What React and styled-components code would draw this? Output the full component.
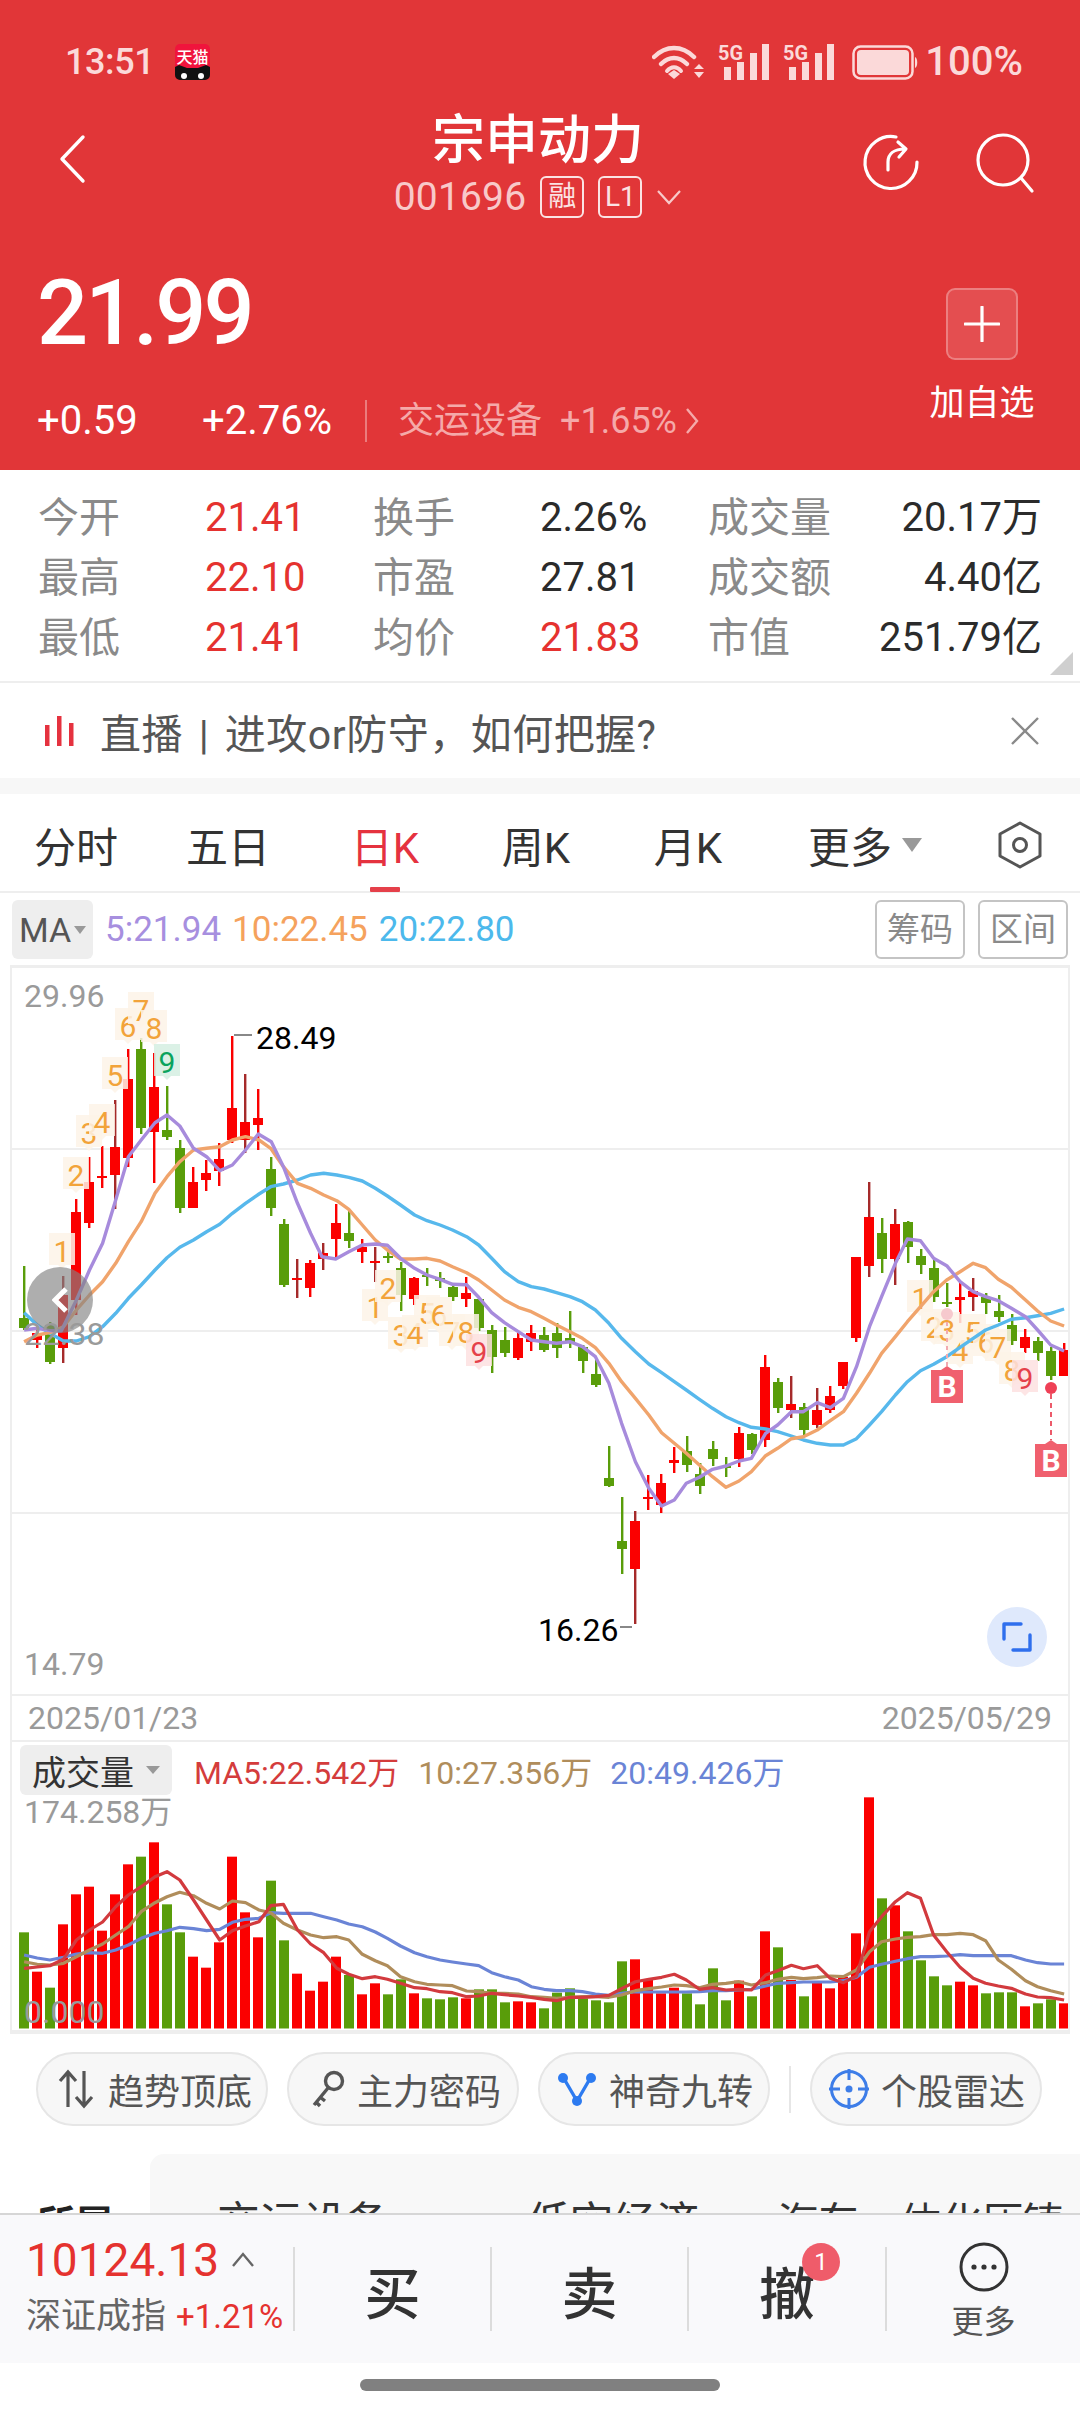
import React from "react";
import styled, { createGlobalStyle } from "styled-components";

const GlobalStyle = createGlobalStyle`
  html, body { margin: 0; padding: 0; background: #fff; }
  * { box-sizing: border-box; }
  body { font-family: Roboto, "Noto Sans CJK SC", sans-serif; }
`;

const RED = "#e5322f";
const CANDLE_RED = "#fb0000";
const CANDLE_GREEN = "#599d0a";

const Page = styled.div`
  width: 1080px;
  height: 2412px;
  display: flex;
  flex-direction: column;
  overflow: hidden;
  background: #fff;
`;

const Header = styled.div`
  height: 470px;
  background: #e13638;
  color: #fff;
  display: flex;
  flex-direction: column;
  flex: none;
`;

const StatusBar = styled.div`
  height: 106px;
  padding: 44px 57px 0 65px;
  display: flex;
  align-items: flex-start;
  color: #fbd9d9;
  font-size: 36px;
  font-weight: 500;
  line-height: 36px;
`;

const Clock = styled.span`
  width: 110px;
  letter-spacing: -0.4px;
`;

const StatusRight = styled.div`
  margin-left: auto;
  display: flex;
  align-items: center;
`;

const StatusItem = styled.span`
  display: flex;
  margin-right: ${(p) => p.$gap || 0}px;
`;

const BatteryText = styled.span`
  font-size: 40px;
  line-height: 36px;
`;

const NavBar = styled.div`
  height: 114px;
  padding: 0 48px 0 44px;
  display: grid;
  grid-template-columns: 1fr auto 1fr;
  align-items: start;
`;

const BackSlot = styled.div`
  padding: 28px 0 0 14px;
`;

const NavTitle = styled.div`
  text-align: center;
  margin-top: 5px;
`;

const StockName = styled.div`
  font-size: 53px;
  line-height: 60px;
  font-weight: 500;
`;

const StockMeta = styled.div`
  margin-top: 5px;
  display: flex;
  align-items: center;
  justify-content: center;
  gap: 14px;
  color: #f8c9c9;
  font-size: 39px;
  line-height: 42px;
  letter-spacing: 0.2px;
`;

const MetaBadge = styled.span`
  width: 44px;
  height: 42px;
  border: 2px solid #fbe3e3;
  border-radius: 6px;
  color: #fbe3e3;
  font-size: 28px;
  line-height: 38px;
  text-align: center;
  letter-spacing: 0;
`;

const NavIcons = styled.div`
  display: flex;
  gap: 54px;
  padding-top: 26px;
  margin-right: -3px;
  justify-self: end;
`;

const QuoteArea = styled.div`
  flex: 1;
  padding: 0 44px 0 37px;
  display: flex;
  justify-content: space-between;
`;

const PriceBlock = styled.div`
  display: flex;
  flex-direction: column;
`;

const Price = styled.div`
  font-size: 90px;
  line-height: 90px;
  font-weight: 500;
  letter-spacing: -3px;
  margin-top: 49px;
`;

const ChangeRow = styled.div`
  margin-top: 40px;
  display: flex;
  align-items: center;
  font-size: 40px;
  line-height: 44px;
  font-weight: 400;
`;

const ChangeValue = styled.span`
  width: ${(p) => p.$w}px;
`;

const Divider = styled.span`
  width: 2px;
  height: 42px;
  background: rgba(255, 255, 255, 0.35);
  margin: 0 31px 0 33px;
`;

const SectorText = styled.span`
  color: #f5a9a9;
  font-size: ${(p) => p.$size}px;
  font-weight: 400;
  margin-right: ${(p) => p.$gap}px;
`;

const AddBlock = styled.div`
  display: flex;
  flex-direction: column;
  align-items: center;
  width: 108px;
  margin-top: 68px;
`;

const AddButton = styled.div`
  width: 72px;
  height: 72px;
  border: 2px solid rgba(255, 255, 255, 0.28);
  border-radius: 9px;
  background: rgba(255, 255, 255, 0.12);
  display: flex;
  align-items: center;
  justify-content: center;
`;

const AddLabel = styled.div`
  margin-top: 24px;
  font-size: 35px;
  line-height: 40px;
  white-space: nowrap;
`;

const Stats = styled.div`
  flex: none;
  height: 213px;
  padding: 18px 38px 0;
  display: grid;
  grid-template-columns: 167px 168px 167px 168px 167px 167px;
  grid-auto-rows: 60px;
  border-bottom: 2px solid #eeeeee;
  position: relative;
`;

const StatLabel = styled.div`
  font-size: 41px;
  line-height: 60px;
  color: #8a8a8a;
  white-space: nowrap;
`;

const StatValue = styled.div`
  font-size: 40px;
  line-height: 60px;
  color: ${(p) => (p.$red ? RED : "#2b2b2b")};
  text-align: ${(p) => (p.$right ? "right" : "left")};
  white-space: nowrap;
`;

const CornerMark = styled.div`
  position: absolute;
  right: 7px;
  top: 182px;
  width: 23px;
  height: 23px;
  background: #cfcfcf;
  clip-path: polygon(100% 0, 100% 100%, 0 100%);
`;

const LiveRow = styled.div`
  flex: none;
  height: 95px;
  padding: 0 40px 0 45px;
  display: flex;
  align-items: center;
`;

const LiveText = styled.div`
  margin-left: 25px;
  font-size: 41px;
  letter-spacing: 0.5px;
  word-spacing: 5px;
  color: #555;
  white-space: nowrap;
  flex: 1;
`;

const Gap = styled.div`
  flex: none;
  height: 16px;
  background: #f7f7f7;
`;

const Tabs = styled.div`
  flex: none;
  height: 99px;
  display: flex;
  align-items: center;
  border-bottom: 2px solid #eeeeee;
  padding-top: 4px;
`;

const Tab = styled.div`
  position: relative;
  width: ${(p) => p.$w}px;
  height: 93px;
  display: flex;
  align-items: center;
  justify-content: center;
  gap: 10px;
  font-size: 42px;
  color: ${(p) => (p.$active ? "#e5323f" : "#333")};

  &::after {
    content: "";
    display: ${(p) => (p.$active ? "block" : "none")};
    position: absolute;
    bottom: -1px;
    left: 50%;
    margin-left: -15px;
    width: 30px;
    height: 5px;
    background: #e5404a;
    border-radius: 1px;
  }
`;

const Caret = styled.span`
  width: 0;
  height: 0;
  border-left: ${(p) => p.$w}px solid transparent;
  border-right: ${(p) => p.$w}px solid transparent;
  border-top: ${(p) => p.$h}px solid #999;
`;

const MaRow = styled.div`
  flex: none;
  height: 72px;
  padding: 7px 12px 6px;
  display: flex;
  align-items: center;
`;

const MaChip = styled.div`
  width: 81px;
  height: 59px;
  border-radius: 6px;
  background: #eeeeee;
  color: #555;
  display: flex;
  align-items: center;
  justify-content: center;
  gap: 3px;
  font-size: 34px;
  margin-right: 12px;
`;

const MaValue = styled.span`
  color: ${(p) => p.$color};
  font-size: ${(p) => p.$size || 35}px;
  margin-right: ${(p) => p.$gap || 11}px;
  white-space: nowrap;
`;

const RangeButtons = styled.div`
  margin-left: auto;
  display: flex;
  gap: 13px;
`;

const RangeButton = styled.div`
  width: 90px;
  height: 59px;
  border: 2px solid #c4c4c4;
  border-radius: 6px;
  color: #8a8a8a;
  font-size: 33px;
  line-height: 55px;
  text-align: center;
`;

const ChartFrame = styled.div`
  position: relative;
  flex: none;
  width: 1060px;
  height: ${(p) => p.$h}px;
  margin-left: 10px;
  border-left: 2px solid #eeeeee;
  border-right: 2px solid #eeeeee;
  overflow: hidden;
`;

const ChartSvg = styled.svg`
  position: absolute;
  left: -2px;
  top: 0;
  display: block;
`;

const Tag = styled.span`
  position: absolute;
  left: ${(p) => p.$x - 12}px;
  top: ${(p) => p.$y}px;
  font-size: 32px;
  line-height: 36px;
  color: ${(p) => p.$color || "#9a9a9a"};
  white-space: nowrap;
`;

const ExpandButton = styled.div`
  position: absolute;
  left: 975px;
  top: 642px;
  width: 60px;
  height: 60px;
  border-radius: 50%;
  background: #dfe9fc;
  display: flex;
  align-items: center;
  justify-content: center;
`;

const Knob = styled.div`
  position: absolute;
  left: 15px;
  top: 302px;
  width: 66px;
  height: 66px;
  border-radius: 50%;
  background: rgba(130, 130, 130, 0.65);
  display: flex;
  align-items: center;
  justify-content: center;
`;

const DateRow = styled.div`
  flex: none;
  height: 48px;
  margin-left: 10px;
  width: 1060px;
  padding: 0 16px;
  display: flex;
  align-items: center;
  justify-content: space-between;
  border: 2px solid #eeeeee;
  font-size: 32px;
  color: #9a9a9a;
`;

const VolumeLegend = styled.div`
  position: absolute;
  left: 8px;
  top: 3px;
  display: flex;
  align-items: center;
`;

const VolumeChip = styled.div`
  width: 152px;
  height: 50px;
  border-radius: 6px;
  background: #eeeeee;
  color: #333;
  font-size: 34px;
  display: flex;
  align-items: center;
  justify-content: center;
  gap: 12px;
  margin-right: 22px;
`;

const FrameBottom = styled.div`
  flex: none;
  height: 4px;
  width: 1060px;
  margin-left: 10px;
  background: #eeeeee;
`;

const Pills = styled.div`
  flex: none;
  padding: 18px 0 0 36px;
  display: flex;
  align-items: center;
`;

const Pill = styled.div`
  width: 232px;
  height: 74px;
  margin-right: 19px;
  padding-left: ${(p) => p.$pad}px;
  border: 2px solid #e6e6e6;
  border-radius: 37px;
  background: #f7f7f7;
  color: #555;
  font-size: 36px;
  display: flex;
  align-items: center;
  gap: ${(p) => p.$gap}px;
  white-space: nowrap;
`;

const PillDivider = styled.div`
  width: 2px;
  height: 47px;
  margin-right: 19px;
  background: #e6e6e6;
`;

const Content = styled.div`
  flex: 1;
  min-height: 0;
  overflow: hidden;
  display: flex;
  flex-direction: column;
`;

const ConceptRow = styled.div`
  margin-top: 28px;
  display: flex;
`;

const ConceptTitle = styled.div`
  width: 150px;
  padding: 48px 0 0 37px;
  font-size: 38px;
  font-weight: 700;
  line-height: 44px;
  color: #222;
`;

const ConceptPanel = styled.div`
  flex: 1;
  height: 120px;
  border-top-left-radius: 14px;
  background: #f8f8f8;
  padding: 47px 0 0 67px;
  display: flex;
  line-height: 44px;
  color: #333;
  white-space: nowrap;
`;

const ConceptItem = styled.span`
  width: ${(p) => p.$w}px;
  font-size: ${(p) => p.$size}px;
`;

const BottomBar = styled.div`
  flex: none;
  height: 150px;
  border-top: 2px solid #d6d6d6;
  background: #f9f9fb;
  display: flex;
  align-items: center;
`;

const IndexBlock = styled.div`
  width: 295px;
  height: 84px;
  padding-left: 26px;
  border-right: 2px solid #dcdcdc;
  display: flex;
  flex-direction: column;
  white-space: nowrap;
`;

const IndexValue = styled.div`
  font-size: 46px;
  line-height: 34px;
  margin-top: -4px;
  color: ${RED};
  display: flex;
  align-items: center;
  gap: 12px;
`;

const IndexName = styled.div`
  margin-top: 20px;
  font-size: 35px;
  line-height: 40px;
  color: #666;
  display: flex;
  align-items: center;
  gap: 10px;
`;

const IndexChange = styled.span`
  font-size: 33px;
  color: ${RED};
`;

const ActionCell = styled.div`
  position: relative;
  width: ${(p) => p.$w}px;
  height: 84px;
  border-right: 2px solid #dcdcdc;
  display: flex;
  align-items: center;
  justify-content: center;
  font-size: 56px;
  font-weight: 500;
  color: #333;
`;

const CountBadge = styled.span`
  position: absolute;
  left: 113px;
  top: -4px;
  width: 38px;
  height: 38px;
  border-radius: 50%;
  background: #ef5c6a;
  color: #fff;
  font-size: 24px;
  font-weight: 400;
  line-height: 38px;
  text-align: center;
`;

const MoreCell = styled.div`
  flex: 1;
  display: flex;
  flex-direction: column;
  align-items: center;
  gap: 12px;
  font-size: 32px;
  line-height: 36px;
  color: #555;
  padding-top: 4px;
`;

const HomeArea = styled.div`
  flex: none;
  height: 49px;
  background: #fff;
  padding-top: 16px;
  display: flex;
  justify-content: center;
`;

const HomePill = styled.div`
  width: 360px;
  height: 12px;
  border-radius: 6px;
  background: #808080;
`;

// x of the n-th trading day on screen
const dayX = (i) => 24 + i * 13;

// [wick top, body top, body bottom, wick bottom, colour] in page pixels. d = red body with dark wick
const candles = [
  [1266, 1318, 1328, 1330, "g"], [1325, 1333, 1340, 1348, "r"], [1322, 1325, 1362, 1364, "g"], [1276, 1295, 1348, 1363, "d"],
  [1199, 1212, 1300, 1315, "r"], [1157, 1182, 1223, 1228, "r"], [1146, 1176, 1178, 1188, "r"], [1100, 1147, 1175, 1209, "d"],
  [1049, 1079, 1158, 1167, "r"], [1038, 1049, 1128, 1134, "g"], [1053, 1087, 1132, 1183, "r"], [1086, 1130, 1137, 1140, "g"],
  [1140, 1148, 1208, 1213, "g"], [1167, 1182, 1208, 1208, "r"], [1160, 1173, 1180, 1191, "r"], [1143, 1159, 1171, 1186, "r"],
  [1036, 1108, 1140, 1143, "r"], [1074, 1122, 1140, 1153, "d"], [1089, 1118, 1125, 1150, "r"], [1157, 1169, 1208, 1216, "g"],
  [1219, 1224, 1285, 1287, "g"], [1259, 1278, 1280, 1298, "d"], [1260, 1263, 1288, 1297, "r"], [1243, 1253, 1259, 1270, "d"],
  [1204, 1223, 1239, 1258, "r"], [1211, 1233, 1241, 1248, "g"], [1239, 1247, 1252, 1263, "r"], [1247, 1261, 1263, 1282, "d"],
  [1252, 1256, 1258, 1263, "g"], [1262, 1268, 1295, 1311, "g"], [1277, 1278, 1299, 1305, "r"], [1268, 1275, 1277, 1286, "g"],
  [1272, 1278, 1281, 1288, "g"], [1285, 1287, 1297, 1301, "g"], [1277, 1293, 1299, 1307, "r"], [1298, 1299, 1328, 1331, "g"],
  [1325, 1330, 1357, 1373, "g"], [1327, 1340, 1353, 1357, "g"], [1333, 1338, 1358, 1360, "r"], [1325, 1333, 1342, 1351, "r"],
  [1327, 1335, 1350, 1352, "g"], [1323, 1333, 1348, 1358, "g"], [1311, 1338, 1343, 1348, "g"], [1345, 1347, 1361, 1373, "g"],
  [1358, 1374, 1385, 1387, "g"], [1446, 1478, 1486, 1487, "g"], [1497, 1541, 1549, 1574, "g"], [1511, 1521, 1569, 1624, "d"],
  [1475, 1497, 1499, 1510, "r"], [1474, 1483, 1505, 1513, "r"], [1447, 1460, 1463, 1473, "r"], [1436, 1451, 1465, 1472, "g"],
  [1463, 1474, 1486, 1494, "g"], [1441, 1449, 1459, 1466, "g"], [1457, 1466, 1468, 1477, "g"], [1427, 1433, 1459, 1467, "r"],
  [1433, 1434, 1450, 1454, "g"], [1355, 1367, 1440, 1447, "r"], [1378, 1382, 1408, 1413, "g"], [1376, 1404, 1410, 1418, "d"],
  [1403, 1407, 1430, 1435, "g"], [1388, 1410, 1425, 1428, "d"], [1386, 1396, 1410, 1413, "r"], [1362, 1362, 1386, 1389, "r"],
  [1257, 1257, 1338, 1342, "r"], [1182, 1217, 1266, 1277, "d"], [1218, 1233, 1259, 1273, "g"], [1209, 1224, 1259, 1285, "d"],
  [1221, 1222, 1247, 1263, "g"], [1249, 1256, 1265, 1274, "g"], [1260, 1268, 1297, 1302, "g"], [1283, 1302, 1304, 1307, "g"],
  [1283, 1297, 1300, 1323, "r"], [1278, 1291, 1297, 1311, "d"], [1293, 1297, 1303, 1314, "g"], [1295, 1311, 1317, 1322, "g"],
  [1314, 1325, 1341, 1345, "g"], [1329, 1337, 1348, 1353, "r"], [1337, 1341, 1353, 1361, "g"], [1347, 1351, 1376, 1380, "g"],
  [1343, 1350, 1376, 1376, "r"],
];

// the polylines were read off two crops, left half then right half
const leftPt = (base) => (p) => `${(p[0] / 2.904).toFixed(1)},${(base + p[1] / 3).toFixed(1)}`;
const rightPt = (base) => (p) => `${(540 + p[0] / 2.904).toFixed(1)},${(base + p[1] / 3).toFixed(1)}`;
const joinLine = (a, b, baseA, baseB) => [...a.map(leftPt(baseA)), ...b.map(rightPt(baseB))].join(" ");

const ma5 = joinLine(
  [[70,1110],[108,1105],[145,1112],[178,1112],[222,1020],[260,930],[298,850],[336,720],[373,590],[410,540],[450,488],[485,465],[522,498],[562,565],[600,590],[638,632],[675,615],[713,570],[750,522],[788,545],[823,620],[864,730],[902,820],[935,890],[975,897],[1013,875],[1052,855],[1090,852],[1125,856],[1163,895],[1204,925],[1240,945],[1278,958],[1314,973],[1355,974],[1390,1012],[1428,1058],[1465,1088],[1505,1115],[1543,1140]],
  [[12,575],[48,580],[87,575],[123,590],[161,620],[200,700],[237,820],[277,935],[316,1015],[353,1068],[390,1050],[425,1000],[463,982],[501,958],[540,948],[578,933],[614,925],[655,850],[690,825],[730,785],[765,785],[805,758],[843,773],[881,745],[919,650],[957,530],[992,440],[1032,340],[1067,267],[1105,272],[1143,325],[1181,347],[1220,395],[1258,425],[1294,440],[1331,452],[1369,475],[1410,500],[1445,540],[1483,585],[1522,603]],
  960, 1150
);
const ma10 = joinLine(
  [[70,1145],[108,1125],[145,1118],[184,1100],[222,1050],[260,1005],[298,965],[336,910],[373,845],[410,785],[450,700],[485,650],[522,605],[562,570],[600,565],[638,560],[675,540],[713,530],[752,540],[786,565],[823,620],[864,670],[902,685],[940,705],[978,722],[1013,748],[1052,795],[1090,840],[1125,870],[1163,897],[1204,897],[1240,895],[1278,903],[1314,920],[1355,938],[1390,960],[1428,990],[1465,1020],[1505,1042],[1543,1055]],
  [[12,505],[48,525],[87,545],[123,565],[161,593],[200,640],[237,695],[277,745],[316,795],[353,848],[390,880],[425,910],[463,945],[501,980],[540,1012],[578,993],[614,965],[655,917],[690,895],[730,866],[765,860],[805,840],[843,812],[881,785],[919,730],[957,670],[992,610],[1032,560],[1067,515],[1105,470],[1143,425],[1181,390],[1220,365],[1258,340],[1294,353],[1331,388],[1369,412],[1410,450],[1445,483],[1483,513],[1522,528]],
  960, 1150
);
const ma20 = joinLine(
  [[70,1058],[108,1095],[145,1120],[184,1143],[222,1143],[260,1130],[298,1100],[336,1060],[373,1015],[410,975],[450,930],[485,893],[522,862],[562,840],[600,815],[638,793],[675,760],[713,730],[752,702],[786,680],[823,672],[864,660],[902,645],[940,640],[978,645],[1013,652],[1052,663],[1090,685],[1125,708],[1163,735],[1204,765],[1240,782],[1278,795],[1314,810],[1355,830],[1390,855],[1428,895],[1465,935],[1505,965],[1543,980]],
  [[12,417],[48,428],[87,440],[123,455],[161,480],[200,520],[237,565],[277,605],[316,642],[353,668],[390,695],[425,720],[463,748],[501,775],[540,800],[578,818],[614,832],[655,837],[690,845],[730,858],[765,870],[805,880],[843,885],[881,885],[919,866],[957,825],[992,785],[1032,735],[1067,695],[1105,662],[1143,643],[1181,620],[1220,592],[1258,565],[1294,540],[1331,525],[1369,508],[1410,503],[1445,497],[1483,490],[1522,477]],
  960, 1150
);

// top of each volume bar in crop units, g = green
const volumes = [
  [637,"g"],[755,"r"],[803,"g"],[613,"r"],[523,"r"],[500,"r"],[632,"r"],[523,"r"],[433,"r"],[410,"g"],[367,"r"],[553,"g"],[637,"g"],[710,"r"],[743,"r"],[667,"r"],[410,"r"],[577,"r"],[652,"r"],[482,"g"],
  [661,"g"],[761,"r"],[812,"r"],[785,"r"],[710,"r"],[765,"g"],[823,"r"],[790,"r"],[823,"g"],[778,"g"],[820,"r"],[835,"g"],[838,"g"],[832,"g"],[835,"r"],[808,"g"],[808,"g"],[847,"g"],[844,"r"],[847,"r"],
  [865,"g"],[818,"g"],[805,"g"],[835,"g"],[841,"g"],[847,"g"],[724,"g"],[718,"r"],[778,"r"],[820,"r"],[803,"r"],[820,"g"],[853,"g"],[745,"g"],[841,"g"],[782,"r"],[829,"g"],[634,"r"],[682,"g"],[780,"r"],
  [829,"g"],[785,"r"],[805,"r"],[770,"r"],[640,"r"],[232,"r"],[535,"g"],[556,"r"],[634,"g"],[721,"g"],[769,"g"],[796,"g"],[785,"r"],[796,"r"],[820,"g"],[817,"g"],[817,"g"],[859,"r"],[850,"g"],[838,"g"],[850,"r"],
];

const volBlue = joinLine(
  [[70,705],[108,714],[145,720],[184,712],[222,702],[260,698],[298,700],[336,690],[373,675],[410,655],[450,640],[485,632],[522,622],[562,626],[600,632],[638,628],[675,607],[713,598],[752,595],[786,578],[823,580],[864,580],[902,580],[940,590],[978,600],[1013,612],[1052,620],[1090,636],[1125,655],[1163,678],[1204,698],[1240,710],[1278,720],[1314,726],[1355,732],[1390,737],[1428,758],[1465,770],[1505,780],[1543,800]],
  [[12,808],[48,812],[87,812],[123,815],[161,822],[200,826],[237,820],[277,815],[316,816],[353,816],[390,816],[425,816],[463,815],[501,812],[540,812],[578,810],[614,808],[655,798],[690,790],[730,788],[765,786],[805,786],[843,786],[881,782],[919,772],[957,742],[992,733],[1032,724],[1067,716],[1105,710],[1143,710],[1181,708],[1220,704],[1258,707],[1294,707],[1331,707],[1369,707],[1410,720],[1445,728],[1483,732],[1522,732]],
  1720, 1720
);
const volTan = joinLine(
  [[70,725],[108,733],[145,735],[184,730],[222,710],[260,690],[298,672],[336,645],[373,620],[410,575],[450,548],[485,530],[522,517],[562,527],[600,550],[638,567],[675,543],[713,548],[752,570],[786,578],[823,610],[864,630],[902,645],[940,653],[978,650],[1013,660],[1052,703],[1090,722],[1125,737],[1163,770],[1204,785],[1240,793],[1278,795],[1314,797],[1355,813],[1390,815],[1428,820],[1465,820],[1505,822],[1543,830]],
  [[12,832],[48,835],[87,832],[123,830],[161,830],[200,832],[237,825],[277,812],[316,806],[353,801],[390,795],[425,797],[463,803],[501,793],[540,790],[578,785],[614,795],[655,788],[690,778],[730,772],[765,776],[805,773],[843,768],[881,770],[919,750],[957,695],[992,665],[1032,657],[1067,652],[1105,650],[1143,644],[1181,644],[1220,640],[1258,644],[1294,662],[1331,720],[1369,748],[1410,782],[1445,800],[1483,812],[1522,822]],
  1720, 1720
);
const volRed = joinLine(
  [[70,745],[108,741],[145,737],[184,718],[222,660],[260,630],[298,606],[336,560],[373,525],[410,500],[450,470],[485,455],[522,480],[562,540],[600,600],[638,660],[675,632],[713,618],[752,605],[786,557],[823,553],[864,630],[902,672],[940,698],[978,745],[1013,763],[1052,776],[1090,770],[1125,778],[1163,790],[1204,803],[1240,806],[1278,815],[1314,818],[1355,830],[1390,828],[1428,820],[1465,824],[1505,828],[1543,832]],
  [[12,838],[48,842],[87,832],[123,832],[161,830],[200,826],[237,806],[277,785],[316,778],[353,772],[390,763],[425,780],[463,808],[501,803],[540,810],[578,808],[614,810],[655,765],[690,752],[730,736],[765,746],[805,737],[843,775],[881,788],[919,768],[957,635],[992,590],[1032,545],[1067,518],[1105,535],[1143,645],[1181,695],[1220,742],[1258,775],[1294,790],[1331,798],[1369,805],[1410,822],[1445,831],[1483,833],[1522,840]],
  1720, 1720
);

// the nine-turn counters on the candles: [digit, x, y, kind]
const nineMarks = [
  [1,62,1251],[2,76,1175],[3,89,1133],[4,102,1122],[5,115,1075],[6,128,1026],[7,141,1010],[8,154,1028],[9,167,1062,"sell"],
  [1,375,1307],[2,388,1288],[3,401,1335],[4,415,1333],[5,427,1313],[6,439,1315],[7,452,1332],[8,466,1332],[9,479,1352,"buy"],
  [1,920,1298],[2,934,1327],[3,947,1330],[4,960,1350],[5,973,1332],[6,986,1342],[7,998,1347],[8,1012,1370],[9,1025,1378,"buy"],
];

const markStyle = {
  sell: { bg: "#d5eee2", fg: "#0aa35d" },
  buy: { bg: "#fde0e0", fg: "#e5404a" },
  up: { bg: "#fdf3e7", fg: "#f2a33a" },
};

const CandleChart = () => (
  <ChartSvg width="1060" height="729" viewBox="10 965 1060 729">
    <rect x="10" y="965" width="1060" height="3" fill="#eeeeee" />
    {[1148, 1330, 1512].map((y) => (
      <rect key={y} x="10" y={y} width="1060" height="2" fill="#eeeeee" />
    ))}
    {candles.map(([wt, bt, bb, wb, c], i) => {
      const x = dayX(i);
      const body = c === "g" ? CANDLE_GREEN : CANDLE_RED;
      const wick = c === "g" ? CANDLE_GREEN : c === "d" ? "#a52a2a" : CANDLE_RED;
      return (
        <g key={i}>
          <rect x={x - 1} y={wt} width="2.4" height={wb - wt} fill={wick} />
          <rect x={x - 5} y={bt} width="10" height={bb - bt} fill={body} />
        </g>
      );
    })}
    {nineMarks.map(([n, x, y, kind]) => {
      const s = markStyle[kind || "up"];
      return (
        <g key={`${n}-${x}`}>
          <path d={`M${x - 13} ${y - 18}h26v32h-9l-4 4l-4 -4h-9z`} fill={s.bg} fillOpacity="0.85" />
          <text x={x} y={y + 11} textAnchor="middle" fontSize="30" fontFamily="Roboto" fill={s.fg}>{n}</text>
        </g>
      );
    })}
    <polyline points={ma20} fill="none" stroke="#57b8ec" strokeWidth="3.4" strokeLinejoin="round" />
    <polyline points={ma10} fill="none" stroke="#f0a46c" strokeWidth="3.4" strokeLinejoin="round" />
    <polyline points={ma5} fill="none" stroke="#a78bdc" strokeWidth="3.4" strokeLinejoin="round" />
    <line x1="947" y1="1322" x2="947" y2="1368" stroke="#f2aab0" strokeWidth="2" strokeDasharray="4 4" />
    <circle cx="947" cy="1314" r="6" fill="#f6c9cd" />
    <line x1="1051" y1="1394" x2="1051" y2="1440" stroke="#ec5a6a" strokeWidth="2" strokeDasharray="5 4" />
    <circle cx="1051" cy="1388" r="6" fill="#ef4056" />
    {[[947, 1386], [1051, 1460]].map(([x, y]) => (
      <g key={x}>
        <path d={`M${x - 16} ${y - 16}h10l6 -4l6 4h10v33h-32z`} fill="#f0606e" />
        <text x={x} y={y + 11} textAnchor="middle" fontSize="30" fontWeight="700" fontFamily="Roboto" fill="#fff">B</text>
      </g>
    ))}
    <rect x="234" y="1034" width="18" height="2" fill="#888" />
    <rect x="620" y="1626" width="12" height="2" fill="#888" />
  </ChartSvg>
);

const VolumeChart = () => (
  <ChartSvg width="1060" height="288" viewBox="10 1742 1060 288">
    {volumes.map(([top, c], i) => {
      const y = 1720 + top / 3;
      return <rect key={i} x={dayX(i) - 5} y={y} width="10" height={2028.5 - y} fill={c === "g" ? CANDLE_GREEN : CANDLE_RED} />;
    })}
    <polyline points={volBlue} fill="none" stroke="#6a84d6" strokeWidth="3.2" strokeLinejoin="round" />
    <polyline points={volTan} fill="none" stroke="#b08d5b" strokeWidth="3.2" strokeLinejoin="round" />
    <polyline points={volRed} fill="none" stroke="#d23a3e" strokeWidth="3.2" strokeLinejoin="round" />
  </ChartSvg>
);

const TmallIcon = () => (
  <svg width="35" height="36" viewBox="0 0 35 36">
    <rect width="35" height="36" rx="5" fill="#f0143c" />
    <path d="M0 23l4 -2l8 3h11l8 -3l4 2v8a5 5 0 0 1 -5 5h-25a5 5 0 0 1 -5 -5z" fill="#111" />
    <circle cx="9" cy="32" r="3" fill="#fff" />
    <circle cx="26" cy="32" r="3" fill="#fff" />
    <text x="17.5" y="19" textAnchor="middle" fontSize="16" fill="#fff" fontFamily='"Noto Sans CJK SC"'>天猫</text>
  </svg>
);

const WifiIcon = () => (
  <svg width="53" height="36" viewBox="0 0 53 36">
    <path d="M2 13C14 1 30 1 42 13" fill="none" stroke="#fbd9d9" strokeWidth="4.5" strokeLinecap="round" />
    <path d="M9 20C17 12 27 12 35 20" fill="none" stroke="#fbd9d9" strokeWidth="4.5" strokeLinecap="round" />
    <path d="M15 27C19 22 25 22 29 27" fill="none" stroke="#fbd9d9" strokeWidth="4" strokeLinecap="round" />
    <path d="M16 30l6 -4l6 4l-6 5z" fill="#fbd9d9" />
    <path d="M42 25l5 -5l5 5zM42 28h10l-5 6z" fill="#fbd9d9" />
  </svg>
);

const SignalIcon = () => (
  <svg width="52" height="36" viewBox="0 0 52 36" overflow="visible">
    <text x="0" y="16" fontSize="21" fontWeight="700" fontFamily="Roboto" textLength="25" lengthAdjust="spacingAndGlyphs" fill="#fbd9d9">5G</text>
    <rect x="6" y="23" width="7" height="13" fill="#fbd9d9" />
    <rect x="19" y="18" width="7" height="18" fill="#fbd9d9" />
    <rect x="32" y="9" width="7" height="27" fill="#fbd9d9" />
    <rect x="44" y="0" width="7" height="36" fill="#fbd9d9" />
  </svg>
);

const BatteryIcon = () => (
  <svg width="67" height="35" viewBox="0 0 67 35">
    <rect x="1.5" y="1.5" width="59" height="32" rx="7" fill="none" stroke="#fbd9d9" strokeWidth="2.5" />
    <rect x="5" y="5" width="52" height="25" rx="4" fill="#fbd9d9" />
    <path d="M63 12c3 1 3 10 0 11z" fill="#fbd9d9" />
  </svg>
);

const BackIcon = () => (
  <svg width="28" height="50" viewBox="0 0 28 50">
    <path d="M25 3L4 25l21 22" fill="none" stroke="#fff" strokeWidth="3.4" strokeLinecap="round" strokeLinejoin="round" />
  </svg>
);

const ShareIcon = () => (
  <svg width="60" height="60" viewBox="0 0 60 60">
    <path d="M35 5A26 26 0 1 0 56 30" fill="none" stroke="#fff" strokeWidth="3.2" strokeLinecap="round" />
    <path d="M27 38V30C27 22 33 17 44 17M37 10l8 7l-7 8" fill="none" stroke="#fff" strokeWidth="3.2" strokeLinecap="round" strokeLinejoin="round" />
  </svg>
);

const SearchIcon = () => (
  <svg width="60" height="62" viewBox="0 0 60 62">
    <circle cx="28" cy="28" r="25" fill="none" stroke="#fff" strokeWidth="3.2" />
    <path d="M46 46l11 13" stroke="#fff" strokeWidth="3.2" strokeLinecap="round" />
  </svg>
);

const ChevronDown = () => (
  <svg width="26" height="16" viewBox="0 0 26 16">
    <path d="M2 2l11 12L24 2" fill="none" stroke="#f8c9c9" strokeWidth="2.2" />
  </svg>
);

const ChevronRight = () => (
  <svg width="14" height="28" viewBox="0 0 14 28">
    <path d="M2 2l10 12L2 26" fill="none" stroke="#f5a9a9" strokeWidth="2.4" />
  </svg>
);

const PlusIcon = () => (
  <svg width="36" height="36" viewBox="0 0 36 36">
    <path d="M18 1v34M1 18h34" stroke="#fff" strokeWidth="3.2" strokeLinecap="round" />
  </svg>
);

const LiveIcon = () => (
  <svg width="30" height="30" viewBox="0 0 30 30">
    <rect x="0" y="9" width="4.5" height="21" fill="#e5323f" />
    <rect x="12" y="0" width="4.5" height="30" fill="#e5323f" />
    <rect x="24" y="7" width="4.5" height="23" fill="#e5323f" />
  </svg>
);

const CloseIcon = () => (
  <svg width="30" height="30" viewBox="0 0 30 30">
    <path d="M2 2l26 26M28 2L2 28" stroke="#8a8a8a" strokeWidth="2.4" />
  </svg>
);

const HexIcon = () => (
  <svg width="44" height="48" viewBox="0 0 44 48">
    <path d="M22 2L42 13V35L22 46L2 35V13z" fill="none" stroke="#555" strokeWidth="3" strokeLinejoin="round" />
    <circle cx="22" cy="24" r="6.5" fill="none" stroke="#555" strokeWidth="3" />
  </svg>
);

const ExpandIcon = () => (
  <svg width="30" height="30" viewBox="0 0 30 30">
    <path d="M2 17V2h17M28 13V28H11" fill="none" stroke="#2f6fed" strokeWidth="3.4" strokeLinecap="round" strokeLinejoin="round" />
  </svg>
);

const KnobIcon = () => (
  <svg width="16" height="26" viewBox="0 0 16 26">
    <path d="M14 2L3 13l11 11" fill="none" stroke="#fff" strokeWidth="5" />
  </svg>
);

const TrendIcon = () => (
  <svg width="36" height="40" viewBox="0 0 36 40">
    <path d="M10 38V4M2 12l8 -9l8 9M26 2V36M18 28l8 9l8 -9" fill="none" stroke="#555" strokeWidth="3.2" />
  </svg>
);

const KeyIcon = () => (
  <svg width="36" height="40" viewBox="0 0 36 40">
    <circle cx="23" cy="12" r="8.5" fill="none" stroke="#555" strokeWidth="3.4" />
    <path d="M17 19L3 36M9 28l5 4M5 33l4 4" fill="none" stroke="#555" strokeWidth="3.4" />
  </svg>
);

const NineTurnIcon = () => (
  <svg width="38" height="36" viewBox="0 0 38 36">
    <path d="M5 6L19 30L33 6" fill="none" stroke="#2d7bf0" strokeWidth="3.4" />
    <circle cx="5" cy="7" r="5" fill="#2d7bf0" />
    <circle cx="33" cy="7" r="5" fill="#2d7bf0" />
    <circle cx="19" cy="30" r="5" fill="#2d7bf0" />
  </svg>
);

const RadarIcon = () => (
  <svg width="40" height="40" viewBox="0 0 40 40">
    <circle cx="20" cy="20" r="17.5" fill="none" stroke="#3d7de8" strokeWidth="3" />
    <path d="M20 0v11M20 29v11M0 20h11M29 20h11" stroke="#3d7de8" strokeWidth="3" />
    <circle cx="20" cy="20" r="3.5" fill="#3d7de8" />
  </svg>
);

const MoreIcon = () => (
  <svg width="50" height="50" viewBox="0 0 50 50">
    <circle cx="25" cy="25" r="23" fill="none" stroke="#333" strokeWidth="3" />
    <circle cx="15" cy="25" r="2.6" fill="#333" />
    <circle cx="25" cy="25" r="2.6" fill="#333" />
    <circle cx="35" cy="25" r="2.6" fill="#333" />
  </svg>
);

const UpCaret = () => (
  <svg width="24" height="16" viewBox="0 0 24 16">
    <path d="M2 14L12 2l10 12" fill="none" stroke="#666" strokeWidth="2.4" />
  </svg>
);

const stats = [
  ["今开", "21.41", true, "换手", "2.26%", false, "成交量", "20.17万", false],
  ["最高", "22.10", true, "市盈", "27.81", false, "成交额", "4.40亿", false],
  ["最低", "21.41", true, "均价", "21.83", true, "市值", "251.79亿", false],
];

const tabs = [
  { label: "分时", w: 152 },
  { label: "五日", w: 152 },
  { label: "日K", w: 162, active: true },
  { label: "周K", w: 140 },
  { label: "月K", w: 164 },
];

const App = () => (
  <Page>
    <GlobalStyle />
    <Header>
      <StatusBar>
        <Clock>13:51</Clock>
        <TmallIcon />
        <StatusRight>
          <StatusItem $gap={13}><WifiIcon /></StatusItem>
          <StatusItem $gap={13}><SignalIcon /></StatusItem>
          <StatusItem $gap={17}><SignalIcon /></StatusItem>
          <StatusItem $gap={6}><BatteryIcon /></StatusItem>
          <BatteryText>100%</BatteryText>
        </StatusRight>
      </StatusBar>
      <NavBar>
        <BackSlot>
          <BackIcon />
        </BackSlot>
        <NavTitle>
          <StockName>宗申动力</StockName>
          <StockMeta>
            001696
            <MetaBadge>融</MetaBadge>
            <MetaBadge>L1</MetaBadge>
            <ChevronDown />
          </StockMeta>
        </NavTitle>
        <NavIcons>
          <ShareIcon />
          <SearchIcon />
        </NavIcons>
      </NavBar>
      <QuoteArea>
        <PriceBlock>
          <Price>21.99</Price>
          <ChangeRow>
            <ChangeValue $w={165}>+0.59</ChangeValue>
            <span>+2.76%</span>
            <Divider />
            <SectorText $size={36} $gap={18}>交运设备</SectorText>
            <SectorText $size={36} $gap={8}>+1.65%</SectorText>
            <ChevronRight />
          </ChangeRow>
        </PriceBlock>
        <AddBlock>
          <AddButton>
            <PlusIcon />
          </AddButton>
          <AddLabel>加自选</AddLabel>
        </AddBlock>
      </QuoteArea>
    </Header>

    <Stats>
      {stats.map((row) => (
        <React.Fragment key={row[0]}>
          <StatLabel>{row[0]}</StatLabel>
          <StatValue $red={row[2]}>{row[1]}</StatValue>
          <StatLabel>{row[3]}</StatLabel>
          <StatValue $red={row[5]}>{row[4]}</StatValue>
          <StatLabel>{row[6]}</StatLabel>
          <StatValue $right>{row[7]}</StatValue>
        </React.Fragment>
      ))}
      <CornerMark />
    </Stats>

    <LiveRow>
      <LiveIcon />
      <LiveText>直播 | 进攻or防守，如何把握?</LiveText>
      <CloseIcon />
    </LiveRow>
    <Gap />

    <Tabs>
      {tabs.map((t) => (
        <Tab key={t.label} $w={t.w} $active={t.active}>{t.label}</Tab>
      ))}
      <Tab $w={190}>
        更多
        <Caret $w={10} $h={14} />
      </Tab>
      <Tab $w={120}>
        <HexIcon />
      </Tab>
    </Tabs>

    <MaRow>
      <MaChip>
        MA
        <Caret $w={6} $h={8} />
      </MaChip>
      <MaValue $color="#a78fdf">5:21.94</MaValue>
      <MaValue $color="#f5a25d">10:22.45</MaValue>
      <MaValue $color="#4cb9ec">20:22.80</MaValue>
      <RangeButtons>
        <RangeButton>筹码</RangeButton>
        <RangeButton>区间</RangeButton>
      </RangeButtons>
    </MaRow>

    <ChartFrame $h={729}>
      <CandleChart />
      <Tag $x={24} $y={13}>29.96</Tag>
      <Tag $x={256} $y={55} $color="#000">28.49</Tag>
      <Knob>
        <KnobIcon />
      </Knob>
      <Tag $x={24} $y={351}>22.38</Tag>
      <Tag $x={538} $y={647} $color="#000">16.26</Tag>
      <Tag $x={24} $y={681}>14.79</Tag>
      <ExpandButton>
        <ExpandIcon />
      </ExpandButton>
    </ChartFrame>

    <DateRow>
      <span>2025/01/23</span>
      <span>2025/05/29</span>
    </DateRow>

    <ChartFrame $h={288}>
      <VolumeChart />
      <VolumeLegend>
        <VolumeChip>
          成交量
          <Caret $w={7} $h={8} />
        </VolumeChip>
        <MaValue $color="#d43c3c" $size={32} $gap={19}>MA5:22.542万</MaValue>
        <MaValue $color="#b08d5b" $size={32} $gap={18}>10:27.356万</MaValue>
        <MaValue $color="#6a84d6" $size={32}>20:49.426万</MaValue>
      </VolumeLegend>
      <Tag $x={24} $y={52}>174.258万</Tag>
      <Tag $x={24} $y={252}>0.000</Tag>
    </ChartFrame>
    <FrameBottom />

    <Content>
      <Pills>
        <Pill $pad={20} $gap={14}>
          <TrendIcon />
          趋势顶底
        </Pill>
        <Pill $pad={22} $gap={10}>
          <KeyIcon />
          主力密码
        </Pill>
        <Pill $pad={18} $gap={13}>
          <NineTurnIcon />
          神奇九转
        </Pill>
        <PillDivider />
        <Pill $pad={17} $gap={12}>
          <RadarIcon />
          个股雷达
        </Pill>
      </Pills>
      <ConceptRow>
        <ConceptTitle>所属</ConceptTitle>
        <ConceptPanel>
          <ConceptItem $w={310} $size={43}>交运设备</ConceptItem>
          <ConceptItem $w={250} $size={43}>低空经济</ConceptItem>
          <ConceptItem $w={300} $size={41}>汽车一体化压铸</ConceptItem>
        </ConceptPanel>
      </ConceptRow>
    </Content>

    <BottomBar>
      <IndexBlock>
        <IndexValue>
          10124.13
          <UpCaret />
        </IndexValue>
        <IndexName>
          深证成指
          <IndexChange>+1.21%</IndexChange>
        </IndexName>
      </IndexBlock>
      <ActionCell $w={197}>买</ActionCell>
      <ActionCell $w={197}>卖</ActionCell>
      <ActionCell $w={198}>
        撤
        <CountBadge>1</CountBadge>
      </ActionCell>
      <MoreCell>
        <MoreIcon />
        更多
      </MoreCell>
    </BottomBar>
    <HomeArea>
      <HomePill />
    </HomeArea>
  </Page>
);

export default App;
